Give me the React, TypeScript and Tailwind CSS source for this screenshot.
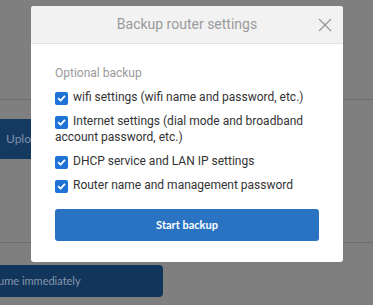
import { FC } from 'react';

const options: string[] = [
  'wifi settings (wifi name and password, etc.)',
  'Internet settings (dial mode and broadband account password, etc.)',
  'DHCP service and LAN IP settings',
  'Router name and management password',
];

const Check: FC = () => (
  <span className="inline-flex align-[-2px] w-[13px] h-[13px] mr-[5px] rounded-[2px] bg-[#1f72d6] items-center justify-center">
    <svg width="9" height="9" viewBox="0 0 10 10" fill="none">
      <path d="M1.8 5.2 L4 7.3 L8.3 2.6" stroke="#fff" strokeWidth="2" strokeLinecap="round" strokeLinejoin="round" />
    </svg>
  </span>
);

const App: FC = () => {
  return (
    <div className="relative w-[373px] h-[305px] overflow-hidden bg-[#7f7f7f] font-['Roboto',sans-serif]">
      {/* page behind the overlay */}
      <div className="flex flex-col">
        <div className="h-[100px] border-b border-[#6c6c6c]"></div>
        <div className="pt-[19px]">
          <div className="w-[31px] h-[40px] bg-[#143a62] overflow-hidden flex items-center">
            <span className="ml-[6px] text-[12px] text-[#7f93aa] font-['Lato',sans-serif]">Upload</span>
          </div>
        </div>
        <div className="mt-[83px] border-b border-[#6c6c6c]"></div>
        <div className="pt-[22px]">
          <div className="w-[163px] h-[32px] bg-[#12355c] rounded-r-[4px] overflow-hidden flex items-center">
            <span className="ml-[-19px] whitespace-nowrap text-[11px] text-[#8796ab] font-['Lato',sans-serif]">Resume immediately</span>
          </div>
        </div>
      </div>

      {/* modal */}
      <div className="absolute left-[31px] top-[6px] w-[312px] h-[256px] bg-white rounded-[3px] overflow-hidden">
        <div className="relative h-[38px] bg-[#f2f2f2] border-b border-[#e2e2e2] flex items-center justify-center">
          <span className="text-[14px] text-[#9a9a9a]">Backup router settings</span>
          <svg className="absolute right-[10px] top-[11px]" width="16" height="16" viewBox="0 0 16 16" fill="none">
            <path d="M2 2 L14 14 M14 2 L2 14" stroke="#9a9a9a" strokeWidth="1.4" />
          </svg>
        </div>
        <div className="px-[24px] pt-[21px]">
          <div className="text-[12px] leading-[16px] text-[#9a9a9a]">Optional backup</div>
          <div className="mt-[8px] flex flex-col gap-[8px]">
            {options.map((o) => (
              <div key={o} className="text-[12px] leading-[16px] text-[#333]">
                <Check />
                {o}
              </div>
            ))}
          </div>
          <button className="mt-[16px] w-full h-[32px] rounded-[3px] bg-[#2a73c3] text-white text-[11px] font-bold font-['Lato',sans-serif]">
            Start backup
          </button>
        </div>
      </div>
    </div>
  );
};

export default App;
